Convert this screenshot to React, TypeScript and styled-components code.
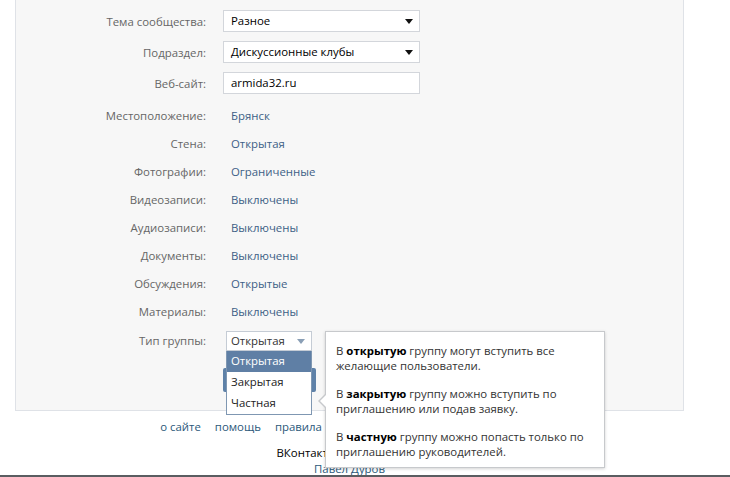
import React from "react";
import styled, { createGlobalStyle } from "styled-components";

const GlobalStyle = createGlobalStyle`
  html, body { margin: 0; padding: 0; background: #fff; }
  body { font-family: "Open Sans", "Noto Sans", Arial, sans-serif; font-size: 11.4px; color: #000; }
  * { box-sizing: border-box; }
`;

const Page = styled.div`
  width: 730px;
  height: 477px;
  display: flex;
  flex-direction: column;
  overflow: hidden;
`;

const Viewport = styled.div`
  flex: 1;
  overflow: hidden;
  position: relative;
`;

const BottomLine = styled.div`
  height: 2px;
  background: #5a5d61;
`;

const Panel = styled.div`
  margin-left: 15px;
  width: 669px;
  background: #f7f7f7;
  border: 1px solid #dfe2e7;
  border-top: none;
  padding: 10px 0 18px;
`;

const InputGroup = styled.div`
  display: flex;
  flex-direction: column;
  gap: 9px;
  margin-bottom: 7px;
`;

const Row = styled.div<{ $h: number }>`
  display: grid;
  grid-template-columns: 190px 1fr;
  column-gap: 17px;
  align-items: center;
  height: ${(p) => p.$h}px;
`;

const Label = styled.div`
  text-align: right;
  color: #666;
  white-space: nowrap;
`;

const Value = styled.div`
  padding-left: 8px;
  color: #3d5f86;
`;

const Field = styled.div`
  position: relative;
  width: 197px;
  height: 22px;
  background: #fff;
  border: 1px solid #d3d6db;
  padding: 0 24px 0 7px;
  line-height: 20px;
  color: #000;
`;

const Caret = styled.span<{ $color?: string; $top?: number }>`
  position: absolute;
  right: 6px;
  top: ${(p) => p.$top ?? 8}px;
  width: 0;
  height: 0;
  border-left: 4px solid transparent;
  border-right: 4px solid transparent;
  border-top: 5px solid ${(p) => p.$color || "#111"};
`;

const TypeRow = styled.div`
  display: grid;
  grid-template-columns: 190px 1fr;
  column-gap: 17px;
  align-items: start;
  padding-top: 6px;
`;

const TypeLabel = styled(Label)`
  line-height: 20px;
`;

const SelectWrap = styled.div`
  position: relative;
  margin-left: 3px;
  width: 86px;
  height: 20px;
`;

const Select = styled.div`
  height: 20px;
  background: #fff;
  border: 1px solid #c5ccd5;
  padding-left: 4px;
  line-height: 18px;
  color: #333;
  position: relative;
`;

const List = styled.div`
  position: absolute;
  left: 0;
  top: 20px;
  width: 86px;
  background: #fff;
  border: 1px solid #7f97b2;
  border-top: none;
  z-index: 3;
`;

const Item = styled.div<{ $active?: boolean }>`
  height: 21px;
  line-height: 20px;
  padding-left: 4px;
  background: ${(p) => (p.$active ? "#5f7fa5" : "#fff")};
  color: ${(p) => (p.$active ? "#fff" : "#222")};
`;

const ButtonRow = styled.div`
  padding-left: 207px;
  margin-top: 17px;
`;

const Button = styled.button`
  width: 93px;
  height: 24px;
  border: none;
  border-radius: 2px;
  background: #5e81a8;
  color: #fff;
  font: inherit;
  padding: 0;
`;

const Tooltip = styled.div`
  position: absolute;
  left: 99px;
  top: 0;
  width: 280px;
  background: #fff;
  border: 1px solid #c7c9cc;
  box-shadow: 0 1px 3px rgba(0, 0, 0, 0.18);
  padding: 11px 8px 8px 10px;
  color: #333;
  line-height: 15px;
  z-index: 4;

  &::before,
  &::after {
    content: "";
    position: absolute;
    top: 62px;
    width: 0;
    height: 0;
    border-top: 7px solid transparent;
    border-bottom: 7px solid transparent;
  }
  &::before {
    left: -8px;
    border-right: 7px solid #c7c9cc;
  }
  &::after {
    left: -6px;
    border-right: 7px solid #fff;
  }
`;

const Para = styled.p`
  margin: 0 0 13px;
  &:last-child { margin-bottom: 0; }
  b { color: #000; font-weight: 700; }
`;

const Footer = styled.div`
  margin-left: 15px;
  width: 669px;
  text-align: center;
  padding-top: 8px;
  line-height: 15px;
`;

const Links = styled.div`
  display: flex;
  justify-content: center;
  gap: 14px;
  padding-left: 10px;
  color: #2b587a;
  margin-bottom: 11px;
`;

const Copy = styled.div`
  color: #000;
`;

const Author = styled.div`
  color: #2b587a;
  margin-top: 1px;
`;

const fields = [
  { label: "Тема сообщества:", value: "Разное", select: true },
  { label: "Подраздел:", value: "Дискуссионные клубы", select: true },
  { label: "Веб-сайт:", value: "armida32.ru", select: false },
];

const rows = [
  ["Местоположение:", "Брянск"],
  ["Стена:", "Открытая"],
  ["Фотографии:", "Ограниченные"],
  ["Видеозаписи:", "Выключены"],
  ["Аудиозаписи:", "Выключены"],
  ["Документы:", "Выключены"],
  ["Обсуждения:", "Открытые"],
  ["Материалы:", "Выключены"],
];

const footerLinks = ["о сайте", "помощь", "правила", "реклама", "разработчикам", "вакансии"];

export default function App() {
  return (
    <>
      <GlobalStyle />
      <Page>
        <Viewport>
          <Panel>
            <InputGroup>
              {fields.map((f) => (
                <Row key={f.label} $h={22}>
                  <Label>{f.label}</Label>
                  <Field>
                    {f.value}
                    {f.select && <Caret />}
                  </Field>
                </Row>
              ))}
            </InputGroup>
            {rows.map(([l, v]) => (
              <Row key={l} $h={28}>
                <Label>{l}</Label>
                <Value>{v}</Value>
              </Row>
            ))}
            <TypeRow>
              <TypeLabel>Тип группы:</TypeLabel>
              <SelectWrap>
                <Select>
                  Открытая
                  <Caret $color="#8a9fb6" $top={7} />
                </Select>
                <List>
                  <Item $active>Открытая</Item>
                  <Item>Закрытая</Item>
                  <Item>Частная</Item>
                </List>
                <Tooltip>
                  <Para>
                    В <b>открытую</b> группу могут вступить все желающие пользователи.
                  </Para>
                  <Para>
                    В <b>закрытую</b> группу можно вступить по приглашению или подав заявку.
                  </Para>
                  <Para>
                    В <b>частную</b> группу можно попасть только по приглашению руководителей.
                  </Para>
                </Tooltip>
              </SelectWrap>
            </TypeRow>
            <ButtonRow>
              <Button>Сохранить</Button>
            </ButtonRow>
          </Panel>
          <Footer>
            <Links>
              {footerLinks.map((l) => (
                <span key={l}>{l}</span>
              ))}
            </Links>
            <Copy>ВКонтакте © 2013 Русский</Copy>
            <Author>Павел Дуров</Author>
          </Footer>
        </Viewport>
        <BottomLine />
      </Page>
    </>
  );
}
